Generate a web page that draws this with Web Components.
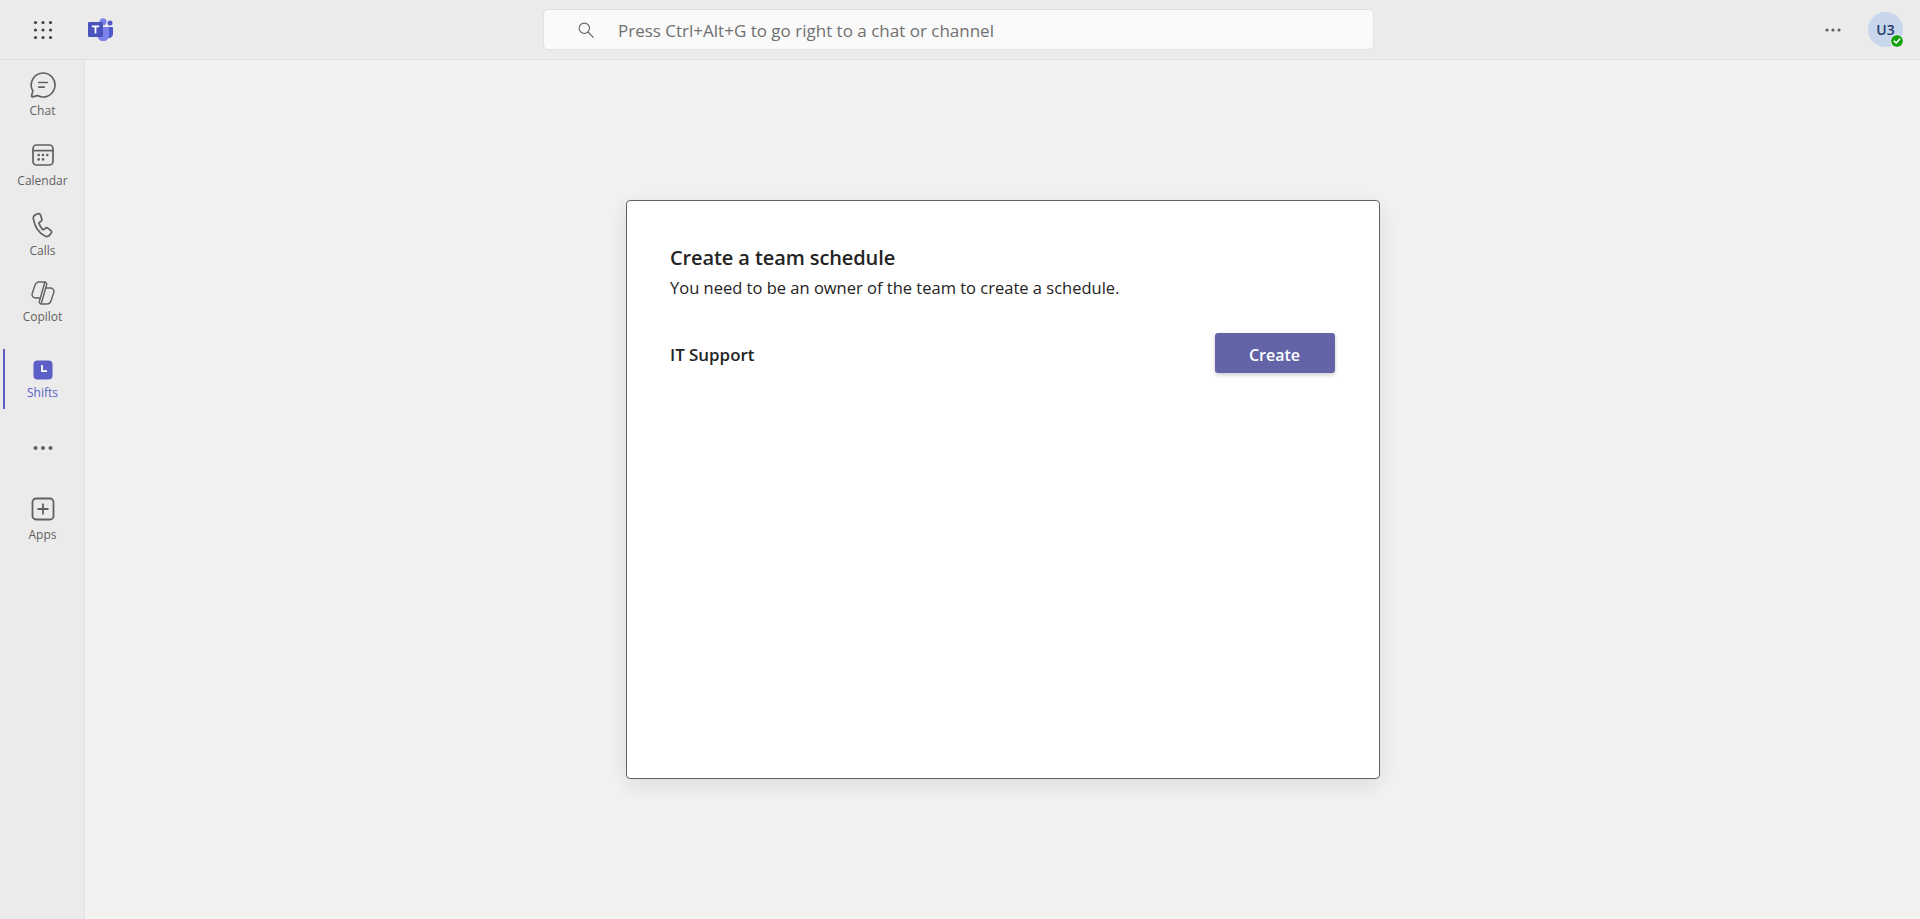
<!DOCTYPE html>
<html lang="en">
<head>
<meta charset="UTF-8">
<title>Shifts</title>
<style>
  html, body { margin: 0; height: 100%; }
  body { font-family: "Open Sans", "Noto Sans", sans-serif; overflow: hidden; }
  rail-item.chat, rail-item.calendar { height: 70px; }
  rail-item.calls { height: 68px; }
  rail-item.copilot { height: 69px; --label-gap: 3px; }
  rail-item.shifts { height: 60px; padding-top: 8px; box-sizing: border-box; --label-gap: 2px; margin-bottom: 26px; }
  rail-item.more { height: 61px; }
</style>
<script>
  class TeamsShell extends HTMLElement {
    constructor() {
      super();
      this.attachShadow({ mode: "open" }).innerHTML = `
        <style>
          :host { display: grid; grid-template: 60px 1fr / 85px 1fr; height: 100vh; background: #f3f2f1; }
          ::slotted([slot=top]) { grid-column: 1 / 3; }
        </style>
        <slot name="top"></slot>
        <slot name="side"></slot>
        <slot></slot>`;
    }
  }
  customElements.define("teams-shell", TeamsShell);

  class TopBar extends HTMLElement {
    constructor() {
      super();
      this.attachShadow({ mode: "open" }).innerHTML = `
        <style>
          :host { display: grid; grid-template-columns: 543px 831px 1fr; align-items: center; background: #ebebeb; border-bottom: 1px solid #e0e0e0; box-sizing: border-box; height: 60px; }
          .left { display: flex; align-items: center; }
          .waffle { width: 88px; display: flex; justify-content: center; padding-right: 3px; box-sizing: border-box; }
          .right { display: flex; align-items: center; justify-content: flex-end; padding-right: 17px; gap: 27px; }
          svg { display: block; }
        </style>
        <div class="left">
          <div class="waffle">
            <svg width="20" height="20" viewBox="0 0 20 20" fill="#424242">
              <circle cx="2.5" cy="2.5" r="1.6"/><circle cx="10" cy="2.5" r="1.6"/><circle cx="17.5" cy="2.5" r="1.6"/>
              <circle cx="2.5" cy="10" r="1.6"/><circle cx="10" cy="10" r="1.6"/><circle cx="17.5" cy="10" r="1.6"/>
              <circle cx="2.5" cy="17.5" r="1.6"/><circle cx="10" cy="17.5" r="1.6"/><circle cx="17.5" cy="17.5" r="1.6"/>
            </svg>
          </div>
          <svg width="25" height="23" viewBox="0 0 25 23">
            <circle cx="22" cy="5" r="2.5" fill="#5059c9"/>
            <path d="M18 9h6a1 1 0 0 1 1 1v6a4 4 0 0 1-6 3.400z" fill="#5059c9"/>
            <circle cx="15" cy="3.700" r="3.500" fill="#7b83eb"/>
            <path d="M10 9h10a1 1 0 0 1 1 1v7.200a5.800 5.800 0 0 1-11.600.600z" fill="#7b83eb"/>
            <rect x="0" y="4" width="15" height="15" rx="1.200" fill="#4b53bc"/>
            <path d="M11.200 7.600H3.800v1.600h2.800v6.200h1.800V9.200h2.800z" fill="#fff"/>
          </svg>
        </div>
        <slot></slot>
        <div class="right">
          <svg width="16" height="4" viewBox="0 0 16 4" fill="#616161"><circle cx="2" cy="2" r="1.600"/><circle cx="8" cy="2" r="1.600"/><circle cx="14" cy="2" r="1.600"/></svg>
          <slot name="me"></slot>
        </div>`;
    }
  }
  customElements.define("top-bar", TopBar);

  class SearchBox extends HTMLElement {
    constructor() {
      super();
      this.attachShadow({ mode: "open" }).innerHTML = `
        <style>
          :host { display: flex; align-items: center; height: 41px; box-sizing: border-box; background: #fafafa; border: 1px solid #e0e0e0; border-radius: 5px; padding-left: 34px; gap: 24px; font-size: 17px; color: #707070; }
          svg { display: block; }
          span { position: relative; top: 1px; }
        </style>
        <svg width="16" height="16" viewBox="0 0 16 16" fill="none" stroke="#616161" stroke-width="1.100" stroke-linecap="round"><circle cx="6.300" cy="6.300" r="5.200"/><path d="M10 10l5.300 5.300"/></svg>
        <span><slot></slot></span>`;
    }
  }
  customElements.define("search-box", SearchBox);

  class UserAvatar extends HTMLElement {
    constructor() {
      super();
      this.attachShadow({ mode: "open" }).innerHTML = `
        <style>
          :host { display: flex; align-items: center; justify-content: center; position: relative; width: 35px; height: 35px; border-radius: 50%; background: #c8d6ec; color: #1f3a6e; font-size: 14px; font-weight: 600; }
          .presence { position: absolute; right: 0; bottom: 0; width: 12px; height: 12px; border-radius: 50%; background: #13a10e; outline: 1px solid #ebebeb; display: flex; align-items: center; justify-content: center; }
        </style>
        <slot></slot>
        <span class="presence"><svg width="8" height="8" viewBox="0 0 8 8" fill="none" stroke="#fff" stroke-width="1.600" stroke-linecap="round" stroke-linejoin="round"><path d="M1.200 4.200 3.200 6 6.800 2"/></svg></span>`;
    }
  }
  customElements.define("user-avatar", UserAvatar);

  class SideRail extends HTMLElement {
    constructor() {
      super();
      this.attachShadow({ mode: "open" }).innerHTML = `
        <style>
          :host { display: flex; flex-direction: column; background: #ebebeb; border-right: 1px solid #e0e0e0; box-sizing: border-box; padding: 12px 0 0 1px; }
        </style>
        <slot></slot>`;
    }
  }
  customElements.define("side-rail", SideRail);

  class RailItem extends HTMLElement {
    constructor() {
      super();
      this.attachShadow({ mode: "open" }).innerHTML = `
        <style>
          :host { display: flex; flex-direction: column; align-items: center; position: relative; color: #616161; font-size: 12px; line-height: 16px; }
          :host([active]) { color: #5b5fc7; }
          .bar { display: none; position: absolute; left: 2px; top: 0; bottom: 0; width: 2px; background: #5b5fc7; }
          :host([active]) .bar { display: block; }
          .icon { height: 26px; display: flex; align-items: center; justify-content: center; }
          ::slotted(svg) { display: block; }
          .label { margin-top: var(--label-gap, 5px); }
        </style>
        <span class="bar"></span>
        <div class="icon"><slot name="icon"></slot></div>
        <span class="label"><slot></slot></span>`;
    }
  }
  customElements.define("rail-item", RailItem);

  class ScheduleCard extends HTMLElement {
    constructor() {
      super();
      this.attachShadow({ mode: "open" }).innerHTML = `
        <style>
          :host { display: block; width: 754px; height: 579px; box-sizing: border-box; background: #fff; border: 1px solid #616161; border-radius: 4px; box-shadow: 0 6px 24px rgba(0,0,0,.1); padding: 43px 44px 43px 43.500px; color: #242424; }
          h2 { margin: 0; font-size: 20px; font-weight: 600; line-height: 28px; letter-spacing: -.1px; }
          p { margin: 4px 0 0; font-size: 16.500px; line-height: 24px; }
          .row { display: flex; align-items: center; justify-content: space-between; margin-top: 33px; height: 40px; font-size: 16.900px; font-weight: 600; }
          .team { padding-top: 2px; }
        </style>
        <h2><slot name="title"></slot></h2>
        <p><slot name="sub"></slot></p>
        <div class="row"><span class="team"><slot name="team"></slot></span><slot name="action"></slot></div>`;
    }
  }
  customElements.define("schedule-card", ScheduleCard);

  class TeamsButton extends HTMLElement {
    constructor() {
      super();
      this.attachShadow({ mode: "open" }).innerHTML = `
        <style>
          :host { display: flex; align-items: center; justify-content: center; width: 120px; height: 40px; box-sizing: border-box; padding-top: 3px; border-radius: 3px; background: #6264a7; color: #fff; font-size: 16px; font-weight: 600; box-shadow: 0 2px 4px rgba(0,0,0,.2); }
        </style>
        <slot></slot>`;
    }
  }
  customElements.define("teams-button", TeamsButton);

  class MainStage extends HTMLElement {
    constructor() {
      super();
      this.attachShadow({ mode: "open" }).innerHTML = `
        <style>
          :host { display: flex; align-items: center; justify-content: center; }
        </style>
        <slot></slot>`;
    }
  }
  customElements.define("main-stage", MainStage);
</script>
</head>
<body>
<teams-shell>
  <top-bar slot="top">
    <search-box>Press Ctrl+Alt+G to go right to a chat or channel</search-box>
    <user-avatar slot="me">U3</user-avatar>
  </top-bar>
  <side-rail slot="side">
    <rail-item class="chat">
      <svg slot="icon" width="26" height="26" viewBox="0.500 0.500 25 25" fill="none" stroke="#616161" stroke-width="1.600" stroke-linecap="round" stroke-linejoin="round"><path d="M13 1.500a11.500 11.500 0 1 1-5.300 21.700l-4.900 1.200c-.5.100-.9-.3-.8-.8l1.200-4.900A11.500 11.500 0 0 1 13 1.500z"/><path d="M8.800 10.600h8.400M8.800 15h5.400"/></svg>
      Chat
    </rail-item>
    <rail-item class="calendar">
      <svg slot="icon" width="24" height="24" viewBox="0 0 24 24" fill="none" stroke="#616161" stroke-width="1.700"><rect x="2" y="2" width="20" height="20" rx="3.500"/><path d="M2 7.600h20"/><g fill="#616161" stroke="none"><circle cx="7.700" cy="12" r="1.300"/><circle cx="12" cy="12" r="1.300"/><circle cx="16.300" cy="12" r="1.300"/><circle cx="7.700" cy="16.400" r="1.300"/><circle cx="12" cy="16.400" r="1.300"/></g></svg>
      Calendar
    </rail-item>
    <rail-item class="calls">
      <svg slot="icon" width="24" height="26" viewBox="0 0 24 26" fill="none" stroke="#616161" stroke-width="1.700" stroke-linejoin="round"><path d="M6.600 1.800 4.600 2.600C3 3.300 2 5 2.300 6.700c.7 4 2 7.600 4 10.600 2 3 4.700 5.400 7.800 6.800 1.500.7 3.400.3 4.500-1l1.300-1.600c.8-1 .7-2.400-.3-3.200l-2.500-2c-.8-.7-2-.7-2.800 0l-1.200 1c-.5.400-1.100.400-1.600 0-1.400-1.500-2.700-3.500-3.400-5.500-.2-.6 0-1.200.5-1.500l1.200-.9c.9-.6 1.200-1.700.9-2.700L9.600 3.200C9.200 2 7.800 1.300 6.600 1.800z"/></svg>
      Calls
    </rail-item>
    <rail-item class="copilot">
      <svg slot="icon" width="24" height="24" viewBox="0 0 24 24" fill="none" stroke="#616161" stroke-width="1.400" stroke-linecap="round" stroke-linejoin="round">
        <path d="M13.500 1H8C5.800 1 4.400 2.600 3.700 5L1.200 12.500C.5 14.800 2.200 17 4.500 17h5M13.500 1c1.500 0 2.500 1.300 2.100 2.800L10.200 22.800"/>
        <path d="M13.500 1H8C5.800 1 4.400 2.600 3.700 5L1.200 12.500C.5 14.800 2.200 17 4.500 17h5M13.500 1c1.500 0 2.500 1.300 2.100 2.800L10.200 22.800" transform="rotate(180 12 12)"/>
      </svg>
      Copilot
    </rail-item>
    <rail-item class="shifts" active>
      <svg slot="icon" width="20" height="20" viewBox="0 0 20 20"><rect x="0.500" y="0.500" width="19" height="19" rx="4" fill="#5b5fc7"/><path d="M9 5v6.200h5" fill="none" stroke="#fff" stroke-width="1.800"/></svg>
      Shifts
    </rail-item>
    <rail-item class="more">
      <svg slot="icon" width="20" height="4" viewBox="0 0 20 4" fill="#616161"><circle cx="2.500" cy="2" r="2"/><circle cx="10" cy="2" r="2"/><circle cx="17.500" cy="2" r="2"/></svg>
    </rail-item>
    <rail-item class="apps">
      <svg slot="icon" width="24" height="24" viewBox="0 0 24 24" fill="none" stroke="#616161" stroke-width="1.800"><rect x="1.500" y="1.500" width="21" height="21" rx="3.500"/><path d="M12 6.500v11M6.500 12h11"/></svg>
      Apps
    </rail-item>
  </side-rail>
  <main-stage>
    <schedule-card>
      <span slot="title">Create a team schedule</span>
      <span slot="sub">You need to be an owner of the team to create a schedule.</span>
      <span slot="team">IT Support</span>
      <teams-button slot="action">Create</teams-button>
    </schedule-card>
  </main-stage>
</teams-shell>
</body>
</html>
